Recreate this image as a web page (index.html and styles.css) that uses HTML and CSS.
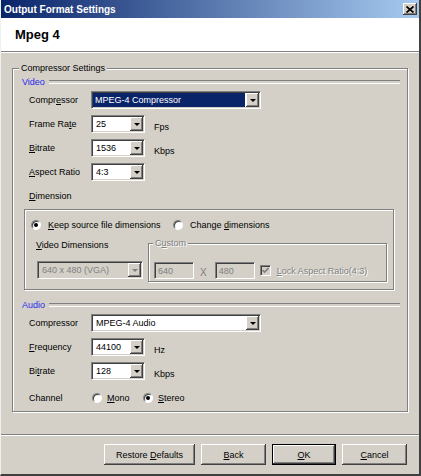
FILE: index.html
```html
<!DOCTYPE html>
<html>
<head>
    <title>Output Format Settings</title>
    <link rel="stylesheet" href="styles.css">
</head>
<body>
<div class="window">
    <div class="titlebar">
        <span class="title">Output Format Settings</span>
        <span class="close">
            <svg width="8" height="7" viewBox="0 0 8 7"><path d="M0.5 0.5 L7.5 6.5 M7.5 0.5 L0.5 6.5" stroke="#000" stroke-width="1.7"/></svg>
        </span>
    </div>

    <div class="header">
        <h1>Mpeg 4</h1>
    </div>

    <div class="content">
        <fieldset class="group">
            <legend>Compressor Settings</legend>

            <div class="section-head">Video</div>
            <div class="row">
                <label>Compr<u>e</u>ssor</label>
                <div class="combo wide selected"><span class="value">MPEG-4 Compressor</span><span class="drop"></span></div>
            </div>
            <div class="row">
                <label>Frame Ra<u>t</u>e</label>
                <div class="combo small"><span class="value">25</span><span class="drop"></span></div>
                <span class="unit">Fps</span>
            </div>
            <div class="row">
                <label><u>B</u>itrate</label>
                <div class="combo small"><span class="value">1536</span><span class="drop"></span></div>
                <span class="unit">Kbps</span>
            </div>
            <div class="row">
                <label><u>A</u>spect Ratio</label>
                <div class="combo small"><span class="value">4:3</span><span class="drop"></span></div>
            </div>
            <div class="row">
                <label><u>D</u>imension</label>
            </div>

            <div class="dimbox">
                <div class="radio-row">
                    <span class="option first"><span class="radio checked"></span><span><u>K</u>eep source file dimensions</span></span>
                    <span class="option"><span class="radio"></span><span>Change <u>d</u>imensions</span></span>
                </div>
                <div class="dim-lower">
                    <div class="dim-left">
                        <div class="dim-label"><u>V</u>ideo Dimensions</div>
                        <div class="combo vga disabled"><span class="value">640 x 480 (VGA)</span><span class="drop"></span></div>
                    </div>
                    <fieldset class="custom">
                        <legend>C<u>u</u>stom</legend>
                        <div class="custom-row">
                            <span class="field">640</span>
                            <span class="times">X</span>
                            <span class="field">480</span>
                            <span class="check">
                                <svg width="7" height="7" viewBox="0 0 7 7"><path d="M0.5 3 L2.5 5 L6.5 1" stroke="#808080" stroke-width="1.6" fill="none"/></svg>
                            </span>
                            <span class="muted"><u>L</u>ock Aspect Ratio(4:3)</span>
                        </div>
                    </fieldset>
                </div>
            </div>

            <div class="section-head audio">Audio</div>
            <div class="row">
                <label>Compressor</label>
                <div class="combo wide"><span class="value">MPEG-4 Audio</span><span class="drop"></span></div>
            </div>
            <div class="row">
                <label><u>F</u>requency</label>
                <div class="combo small"><span class="value">44100</span><span class="drop"></span></div>
                <span class="unit">Hz</span>
            </div>
            <div class="row">
                <label>Bi<u>t</u>rate</label>
                <div class="combo small"><span class="value">128</span><span class="drop"></span></div>
                <span class="unit">Kbps</span>
            </div>
            <div class="row channel">
                <label>Channel</label>
                <span class="option mono"><span class="radio"></span><span><u>M</u>ono</span></span>
                <span class="option"><span class="radio checked"></span><span><u>S</u>tereo</span></span>
            </div>
        </fieldset>
    </div>

    <div class="footer">
        <button class="restore">Restore <u>D</u>efaults</button>
        <button><u>B</u>ack</button>
        <button class="default"><u>O</u>K</button>
        <button><u>C</u>ancel</button>
    </div>
</div>
</body>
</html>
```

FILE: styles.css
```css
* {
    box-sizing: border-box;
}

body {
    margin: 0;
    font-family: "Liberation Sans", Arial, sans-serif;
    font-size: 9px;
    color: #000;
    background: #d4d0c8;
}

.window {
    width: 421px;
    height: 476px;
    display: flex;
    flex-direction: column;
    background: #d4d0c8;
    border-left: 1px solid #f0f0f0;
    border-right: 2px solid #404040;
    border-bottom: 2px solid #404040;
    overflow: hidden;
}

/* title bar */
.titlebar {
    height: 18px;
    flex: none;
    display: flex;
    align-items: center;
    justify-content: space-between;
    padding: 0 2px 0 3px;
    background: linear-gradient(to right, #0a246a, #a6caf0);
}

.title {
    color: #fff;
    font-weight: bold;
    font-size: 10px;
}

.close {
    width: 14px;
    height: 12px;
    display: flex;
    align-items: center;
    justify-content: center;
    background: #d4d0c8;
    box-shadow: inset -1px -1px #404040, inset 1px 1px #fff, inset -2px -2px #808080;
}

/* white header */
.header {
    height: 34px;
    flex: none;
    display: flex;
    align-items: center;
    padding-left: 14px;
    background: #fff;
    border-bottom: 1px solid #808080;
    box-shadow: 0 1px 0 #fff;
}

.header h1 {
    margin: 0;
    font-size: 13px;
    font-weight: bold;
}

/* body */
.content {
    flex: 1;
    padding: 10px 11px 0 11px;
}

fieldset {
    margin: 0;
    min-width: 0;
    border: 1px solid #808080;
    box-shadow: inset 1px 1px #fff, 1px 1px #fff;
}

legend {
    padding: 0 2px;
    line-height: 12px;
    background: #d4d0c8;
}

.group {
    height: 350px;
    padding: 0 7px 0 9px;
}

.group > legend {
    margin-left: -3px;
}

.section-head {
    height: 12px;
    margin-top: 2px;
    display: flex;
    align-items: center;
    color: #2a2aeb;
}

.section-head::after {
    content: "";
    flex: 1;
    height: 2px;
    margin-left: 4px;
    border-top: 1px solid #808080;
    border-bottom: 1px solid #fff;
}

.section-head.audio {
    margin-top: 9px;
}

.row {
    height: 24px;
    display: flex;
    align-items: center;
    padding-left: 7px;
}

.row label {
    width: 62px;
    flex: none;
}

.row.channel {
    margin-top: 3px;
}

.unit {
    margin-left: 9px;
    padding-top: 5px;
}

/* combo boxes */
.combo {
    height: 18px;
    display: flex;
    padding: 1px;
    background: #fff;
    border: 1px solid;
    border-color: #808080 #fff #fff #808080;
    box-shadow: inset 1px 1px #404040, inset -1px -1px #d4d0c8;
}

.combo.wide {
    width: 170px;
}

.combo.small {
    width: 54px;
}

.combo.vga {
    width: 106px;
}

.combo .value {
    flex: 1;
    display: flex;
    align-items: center;
    padding-left: 3px;
    white-space: nowrap;
}

.combo.selected .value {
    background: #0a246a;
    color: #fff;
    margin-right: 1px;
    padding-left: 2px;
}

.combo .drop {
    width: 13px;
    display: flex;
    align-items: center;
    justify-content: center;
    background: #d4d0c8;
    box-shadow: inset -1px -1px #404040, inset 1px 1px #fff, inset -2px -2px #808080;
}

.combo .drop::after {
    content: "";
    border-left: 3px solid transparent;
    border-right: 3px solid transparent;
    border-top: 3px solid #000;
}

.combo.disabled {
    background: #d4d0c8;
}

.combo.disabled .value {
    color: #808080;
}

.combo.disabled .drop::after {
    border-top-color: #808080;
}

/* dimension box */
.dimbox {
    height: 81px;
    margin: 1px 6px 0 2px;
    padding: 8px 6px 0 6px;
    border: 1px solid #808080;
    box-shadow: inset 1px 1px #fff, 1px 1px #fff;
}

.radio-row {
    height: 14px;
    display: flex;
    align-items: center;
}

.option {
    display: flex;
    align-items: center;
    white-space: nowrap;
}

.option.first {
    width: 142px;
}

.option.mono {
    width: 51px;
    margin-left: 1px;
}

.radio {
    width: 10px;
    height: 10px;
    margin-right: 7px;
    border-radius: 50%;
    background: #fff;
    border: 1px solid;
    border-color: #808080 #fff #fff #808080;
    box-shadow: inset 1px 1px #404040;
    display: flex;
    align-items: center;
    justify-content: center;
}

.channel .radio {
    margin-right: 5px;
}

.radio.checked::after {
    content: "";
    width: 4px;
    height: 4px;
    border-radius: 50%;
    background: #000;
}

.dim-lower {
    display: flex;
    margin-top: 5px;
    padding-left: 5px;
}

.dim-left {
    width: 112px;
    flex: none;
}

.dim-label {
    line-height: 12px;
    padding-top: 2px;
}

.dim-left .combo {
    margin-top: 10px;
    margin-left: 1px;
}

.custom {
    width: 239px;
    height: 45px;
    padding: 0 5px;
}

.custom legend {
    margin-left: -1px;
    color: #808080;
    text-shadow: 1px 1px #fff;
}

.custom-row {
    display: flex;
    align-items: center;
    margin-top: 13px;
}

.field {
    width: 40px;
    height: 17px;
    display: flex;
    align-items: center;
    padding-left: 3px;
    color: #808080;
    background: #d4d0c8;
    border: 1px solid;
    border-color: #808080 #fff #fff #808080;
    box-shadow: inset 1px 1px #404040, inset -1px -1px #d4d0c8;
}

.times {
    margin: 3px 8px 0 6px;
    color: #808080;
    font-size: 10px;
}

.check {
    width: 11px;
    height: 11px;
    margin: 0 6px 0 5px;
    display: flex;
    align-items: center;
    justify-content: center;
    background: #d4d0c8;
    border: 1px solid;
    border-color: #808080 #fff #fff #808080;
    box-shadow: inset 1px 1px #404040;
}

.muted {
    color: #808080;
    text-shadow: 1px 1px #fff;
}

/* buttons */
.footer {
    height: 40px;
    flex: none;
    display: flex;
    justify-content: flex-end;
    gap: 6px;
    padding: 9px 12px 0 0;
    border-top: 1px solid #808080;
    box-shadow: inset 0 1px #fff;
}

button {
    width: 65px;
    height: 21px;
    padding: 0;
    font-family: "Liberation Sans", Arial, sans-serif;
    font-size: 9px;
    color: #000;
    background: #d4d0c8;
    border: none;
    box-shadow: inset -1px -1px #404040, inset 1px 1px #fff, inset -2px -2px #808080;
}

button.restore {
    width: 91px;
}

button.default {
    width: 64px;
    border: 1px solid #000;
}
```
